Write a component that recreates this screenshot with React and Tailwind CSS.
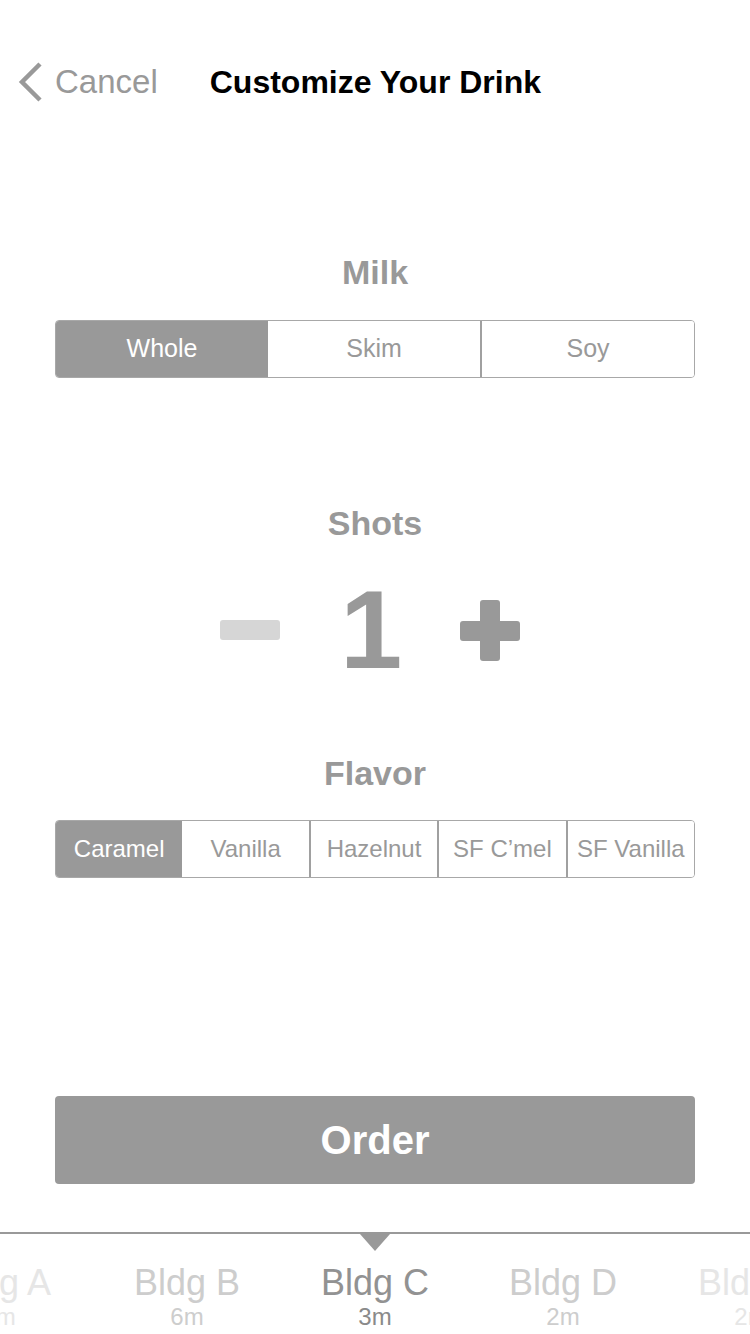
import React, { useState } from 'react';

const font = { fontFamily: '"Liberation Sans", Arial, sans-serif' };

const Segmented = ({ options, selected, onSelect, textClass }) => (
  <div className="flex h-[58px] w-[640px] mx-auto border border-[#a8a8a8] rounded-[4px] overflow-hidden">
    {options.map((opt, i) => {
      const active = opt === selected;
      const showDivider = i > 0 && !active && options[i - 1] !== selected;
      return (
        <button
          key={opt}
          onClick={() => onSelect(opt)}
          className={`flex-1 flex items-center justify-center ${textClass} ${
            active ? 'bg-[#999999] text-white' : 'bg-white text-[#999999]'
          } ${showDivider ? 'border-l-2 border-[#a0a0a0]' : ''}`}
        >
          {opt}
        </button>
      );
    })}
  </div>
);

const buildings = [
  { name: 'Bldg A', time: '8m', tone: 'text-[#e6e6e6]', sub: 'text-[#e6e6e6]' },
  { name: 'Bldg B', time: '6m', tone: 'text-[#cdcdcd]', sub: 'text-[#cdcdcd]' },
  { name: 'Bldg C', time: '3m', tone: 'text-[#929292]', sub: 'text-[#8a8a8a]' },
  { name: 'Bldg D', time: '2m', tone: 'text-[#cdcdcd]', sub: 'text-[#cdcdcd]' },
  { name: 'Bldg E', time: '2m', tone: 'text-[#e6e6e6]', sub: 'text-[#e6e6e6]' },
];

export default function App() {
  const [milk, setMilk] = useState('Whole');
  const [flavor, setFlavor] = useState('Caramel');
  const [shots, setShots] = useState(1);

  return (
    <div className="w-[750px] h-[1334px] bg-white flex flex-col overflow-hidden" style={font}>
      {/* Header */}
      <div className="h-[164px] flex items-center pl-[17px]">
        <button className="flex items-center gap-[12px]">
          <svg width="26" height="42" viewBox="0 0 26 42">
            <polyline points="23,3 5,21 23,39" fill="none" stroke="#999999" strokeWidth="4.5" />
          </svg>
          <span className="text-[33px] text-[#999999]">Cancel</span>
        </button>
        <h1 className="ml-[52px] text-[32px] font-bold text-black">Customize Your Drink</h1>
      </div>

      {/* Milk */}
      <h2 className="mt-[88px] h-[40px] leading-[40px] text-center text-[34px] font-bold text-[#999999]">Milk</h2>
      <div className="mt-[28px]">
        <Segmented
          options={['Whole', 'Skim', 'Soy']}
          selected={milk}
          onSelect={setMilk}
          textClass="text-[25px]"
        />
      </div>

      {/* Shots */}
      <h2 className="mt-[125px] h-[40px] leading-[40px] text-center text-[34px] font-bold text-[#999999]">Shots</h2>
      <div className="mt-[33px] h-[108px] flex items-center justify-center pr-[10px]">
        <button onClick={() => setShots(Math.max(0, shots - 1))} className="w-[60px] h-[20px] rounded-[3px] bg-[#d6d6d6]" />
        <span className="ml-[60px] mr-[62px] w-[58px] text-center text-[112px] leading-none font-bold text-[#999999]">{shots}</span>
        <button onClick={() => setShots(shots + 1)} className="w-[60px] h-[60px] flex items-center justify-center">
          <svg width="60" height="61" viewBox="0 0 60 61">
            <rect x="20" y="0" width="20" height="61" rx="3" fill="#999999" />
            <rect x="0" y="21" width="60" height="20" rx="3" fill="#999999" />
          </svg>
        </button>
      </div>

      {/* Flavor */}
      <h2 className="mt-[69px] h-[40px] leading-[40px] text-center text-[34px] font-bold text-[#999999]">Flavor</h2>
      <div className="mt-[27px]">
        <Segmented
          options={['Caramel', 'Vanilla', 'Hazelnut', 'SF C\u2019mel', 'SF Vanilla']}
          selected={flavor}
          onSelect={setFlavor}
          textClass="text-[24px]"
        />
      </div>

      {/* Order */}
      <button className="mt-[218px] mx-auto w-[640px] h-[88px] rounded-[4px] bg-[#999999] text-white text-[40px] font-bold">
        Order
      </button>

      {/* Building picker */}
      <div className="relative mt-[48px] border-t-2 border-[#999999] flex-1">
        <div className="absolute left-1/2 -translate-x-1/2 top-0 w-0 h-0 border-l-[15px] border-r-[15px] border-t-[17px] border-l-transparent border-r-transparent border-t-[#999999]" />
        <div className="flex justify-center pt-[29px]">
          {buildings.map((b) => (
            <div key={b.name} className="w-[188px] shrink-0 flex flex-col items-center">
              <span className={`text-[36px] leading-[40px] ${b.tone}`}>{b.name}</span>
              <span className={`text-[24px] leading-[28px] ${b.sub}`}>{b.time}</span>
            </div>
          ))}
        </div>
      </div>
    </div>
  );
}
